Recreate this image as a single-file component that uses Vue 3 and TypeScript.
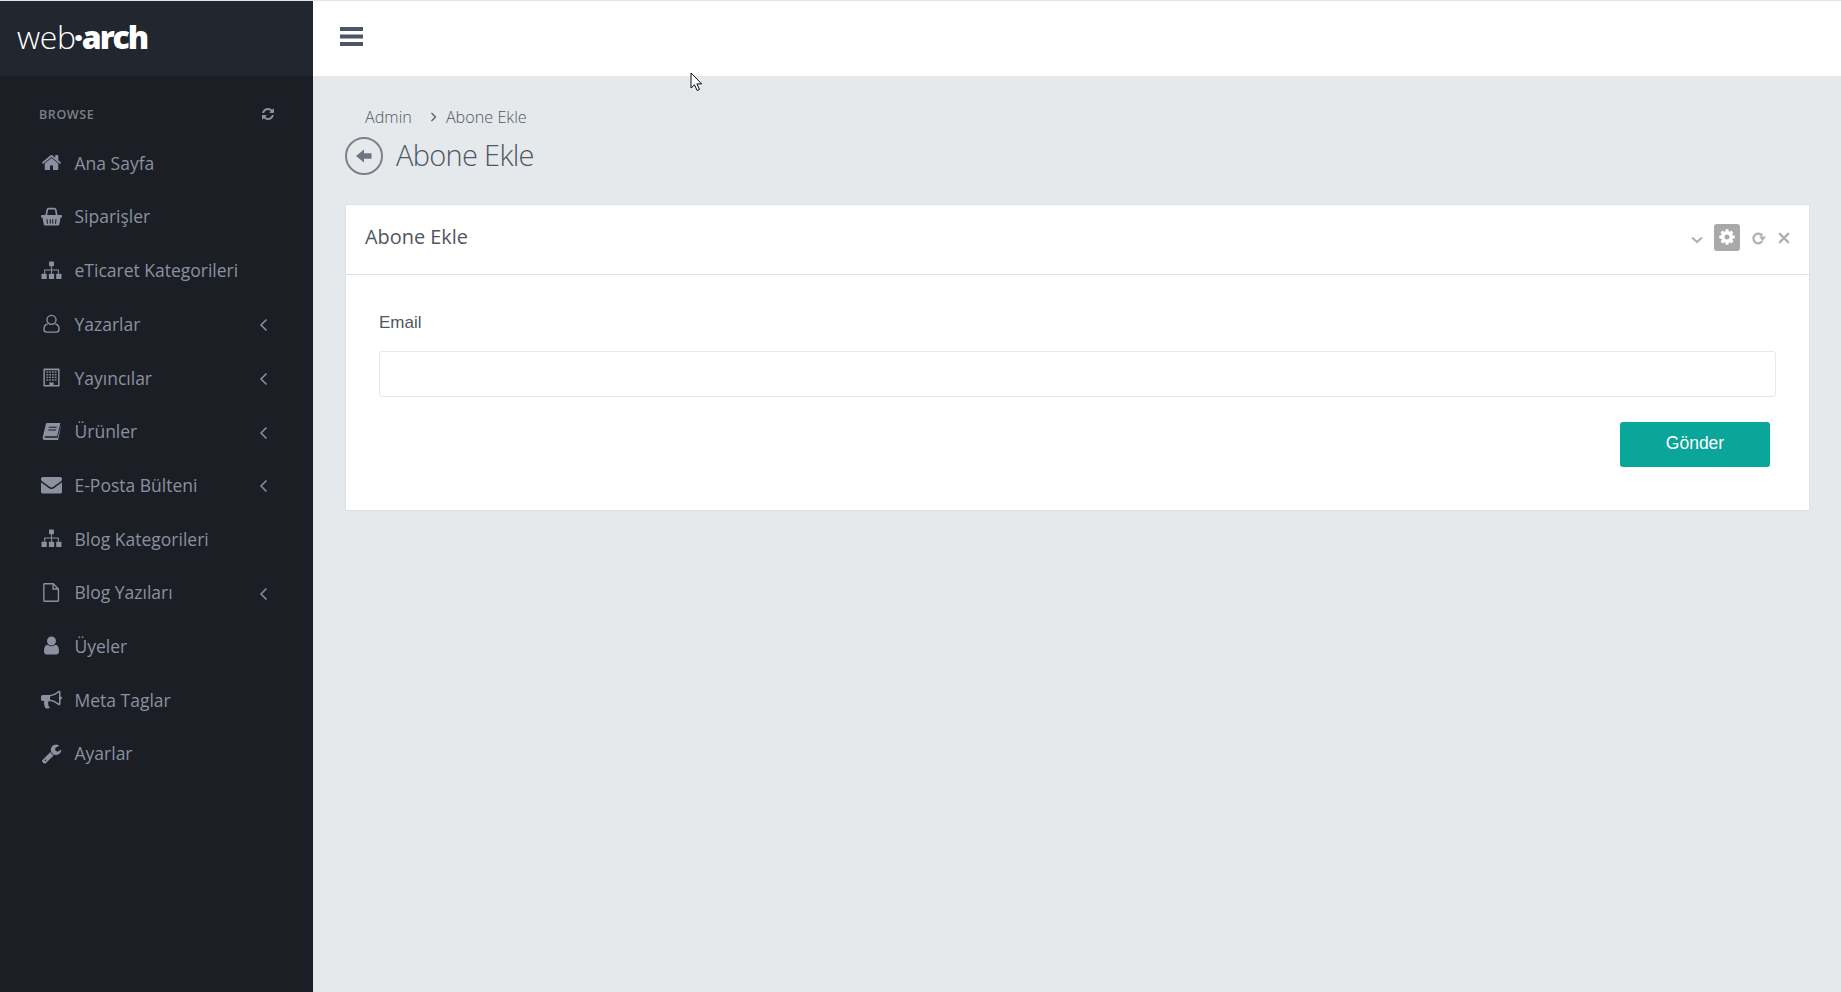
<script setup lang="ts">
interface Item { label: string; icon: string; sub?: boolean }
const items: Item[] = [
  { label: 'Ana Sayfa', icon: 'home' },
  { label: 'Siparişler', icon: 'basket' },
  { label: 'eTicaret Kategorileri', icon: 'sitemap' },
  { label: 'Yazarlar', icon: 'usero', sub: true },
  { label: 'Yayıncılar', icon: 'building', sub: true },
  { label: 'Ürünler', icon: 'book', sub: true },
  { label: 'E-Posta Bülteni', icon: 'envelope', sub: true },
  { label: 'Blog Kategorileri', icon: 'sitemap' },
  { label: 'Blog Yazıları', icon: 'file', sub: true },
  { label: 'Üyeler', icon: 'user' },
  { label: 'Meta Taglar', icon: 'bullhorn' },
  { label: 'Ayarlar', icon: 'wrench' },
]
</script>

<template>
  <div class="page">
    <aside class="sidebar">
      <div class="logo"><span class="web">web</span><span class="dot">·</span><span class="arch">arch</span></div>
      <div class="browse">
        <span>BROWSE</span>
        <svg class="refresh" viewBox="0 0 1792 1792"><path fill="currentColor" d="M1639 1056q0 5-1 7-64 268-268 434.500t-478 166.500q-146 0-282.500-55t-243.500-157l-129 129q-19 19-45 19t-45-19-19-45v-448q0-26 19-45t45-19h448q26 0 45 19t19 45-19 45l-137 137q71 66 161 102t187 36q134 0 250-65t186-179q11-17 53-117 8-23 30-23h192q13 0 22.500 9.500t9.500 22.500zm25-800v448q0 26-19 45t-45 19h-448q-26 0-45-19t-19-45 19-45l138-138q-148-137-349-137-134 0-250 65t-186 179q-11 17-53 117-8 23-30 23h-199q-13 0-22.500-9.500t-9.500-22.500v-7q65-268 270-434.500t480-166.500q146 0 284 55.500t245 156.500l130-129q19-19 45-19t45 19 19 45z"/></svg>
      </div>
      <nav class="menu">
        <a v-for="item in items" :key="item.label" class="item">
          <span class="ico">
            <svg v-if="item.icon === 'home'" viewBox="0 0 1792 1792"><path fill="currentColor" d="M1472 992v480q0 26-19 45t-45 19h-384v-384h-256v384h-384q-26 0-45-19t-19-45v-480q0-1 .5-3t.5-3l575-474 575 474q1 2 1 6zm223-69l-62 74q-8 9-21 11h-3q-13 0-21-7l-692-577-692 577q-12 8-24 7-13-2-21-11l-62-74q-8-10-7-23.500t11-21.500l719-599q32-26 76-26t76 26l244 204v-195q0-14 9-23t23-9h192q14 0 23 9t9 23v408l219 182q10 8 11 21.500t-7 23.500z"/></svg>
            <svg v-else-if="item.icon === 'basket'" viewBox="0 0 20 20"><path fill="none" stroke="currentColor" stroke-width="1.600" d="M5 9l1-5.500q.2-1 1.200-1h5.600q1 0 1.200 1l1 5.500"/><path fill="currentColor" fill-rule="evenodd" d="M1 8.500h18q1 0 1 1v.7q0 1-1 1h-.4l-1.200 6.300q-.2 1-1.200 1H3.800q-1 0-1.200-1L1.400 11.200H1q-1 0-1-1v-.7q0-1 1-1zM5.200 12.500l.5 4.500h1l-.5-4.500zM8.300 12.500v4.500h1v-4.500zM10.700 12.500v4.500h1v-4.500zM13.800 12.500l-.5 4.500h1l.5-4.500z"/></svg>
            <svg v-else-if="item.icon === 'sitemap'" viewBox="0 0 20 20"><g fill="currentColor"><rect x="7.700" y="1.500" width="4.600" height="4.500" rx=".5"/><rect x=".5" y="13" width="5" height="5" rx=".5"/><rect x="7.500" y="13" width="5" height="5" rx=".5"/><rect x="14.500" y="13" width="5" height="5" rx=".5"/><path d="M9.500 6h1v3h6.500v4h-1v-3h-5.500v3h-1v-3H4v3H3V9h6.500z"/></g></svg>
            <svg v-else-if="item.icon === 'usero'" viewBox="0 0 20 20"><g fill="none" stroke="currentColor" stroke-width="1.300"><circle cx="10" cy="6.500" r="4.300"/><path d="M6.300 10.500C4 11 2.800 13 2.800 15.500c0 1.700 1 2.700 2.500 2.700h9.400c1.500 0 2.500-1 2.500-2.700 0-2.500-1.200-4.500-3.500-5"/></g></svg>
            <svg v-else-if="item.icon === 'building'" viewBox="0 0 20 20"><path fill="currentColor" fill-rule="evenodd" d="M3 1.500h14a.7.7 0 0 1 .7.7v15.600a.7.7 0 0 1-.7.7H3a.7.7 0 0 1-.7-.7V2.200a.7.7 0 0 1 .7-.7zM3.700 3v14.100H8v-2.300h4v2.300h4.300V3z"/><g fill="currentColor"><rect x="5.200" y="4.200" width="1.700" height="1.300"/><rect x="7.800" y="4.200" width="1.700" height="1.300"/><rect x="10.500" y="4.200" width="1.700" height="1.300"/><rect x="13.100" y="4.200" width="1.700" height="1.300"/><rect x="5.200" y="6.700" width="1.700" height="1.300"/><rect x="7.800" y="6.700" width="1.700" height="1.300"/><rect x="10.500" y="6.700" width="1.700" height="1.300"/><rect x="13.100" y="6.700" width="1.700" height="1.300"/><rect x="5.200" y="9.200" width="1.700" height="1.300"/><rect x="7.800" y="9.200" width="1.700" height="1.300"/><rect x="10.500" y="9.200" width="1.700" height="1.300"/><rect x="13.100" y="9.200" width="1.700" height="1.300"/><rect x="5.200" y="11.700" width="1.700" height="1.300"/><rect x="7.800" y="11.700" width="1.700" height="1.300"/><rect x="10.500" y="11.700" width="1.700" height="1.300"/><rect x="13.100" y="11.700" width="1.700" height="1.300"/></g></svg>
            <svg v-else-if="item.icon === 'book'" viewBox="0 0 20 20"><path fill="currentColor" d="M6 2h12.500l-3.200 12.500H4.200c-1 0-1.200 1.500 0 1.500h11.600l3.200-12v1L16.300 18H3.500C2 18 1.200 16.600 1.700 15.200L4.500 3.300C4.700 2.500 5.300 2 6 2z"/><path fill="#1b1e24" d="M7.500 5.500h7.500l-.2 1H7.300zM7 8h7.500l-.2 1H6.800z"/></svg>
            <svg v-else-if="item.icon === 'envelope'" viewBox="0 0 1792 1792"><path fill="currentColor" d="M1792 710v794q0 66-47 113t-113 47h-1472q-66 0-113-47t-47-113v-794q44 49 101 87 362 246 497 345 57 42 92.500 65.500t94.500 48 110 24.500h2q51 0 110-24.500t94.500-48 92.500-65.500q170-123 498-345 57-39 100-87zm0-294q0 79-49 151t-122 123q-376 261-468 325-10 7-42.500 30.500t-54 38-52 32.500-57.500 27-50 9h-2q-23 0-50-9t-57.500-27-52-32.500-54-38-42.500-30.500q-91-64-262-182.500t-205-142.500q-62-42-117-115.500t-55-136.500q0-78 41.500-130t118.500-52h1472q65 0 112.500 47t47.500 113z"/></svg>
            <svg v-else-if="item.icon === 'file'" viewBox="0 0 20 20"><path fill="none" stroke="currentColor" stroke-width="1.300" d="M3.400 1.700h8.300l4.900 4.900v11a.7.7 0 0 1-.7.7H3.400a.7.7 0 0 1-.7-.7V2.400a.7.7 0 0 1 .7-.7zM11.500 1.700v5h5"/></svg>
            <svg v-else-if="item.icon === 'user'" viewBox="0 0 1792 1792"><path fill="currentColor" d="M1536 1399q0 109-62.500 187t-150.500 78h-854q-88 0-150.500-78t-62.500-187q0-85 8.500-160.500t31.500-152 58.500-131 94-89 134.500-34.500q131 128 313 128t313-128q76 0 134.500 34.500t94 89 58.500 131 31.500 152 8.500 160.500zm-256-887q0 159-112.500 271.500t-271.500 112.500-271.500-112.500-112.500-271.500 112.500-271.500 271.500-112.500 271.500 112.500 112.500 271.500z"/></svg>
            <svg v-else-if="item.icon === 'bullhorn'" viewBox="0 0 1792 1792"><path fill="currentColor" d="M1664 640q53 0 90.500 37.500t37.500 90.500-37.500 90.500-90.500 37.500v384q0 52-38 90t-90 38q-417-347-812-380-58 19-91 66t-31 100.500 40 92.500q-20 33-23 65.500t6 58 33.500 55 48 50 61.500 50.500q-29 58-111.500 83t-168.500 11.500-132-55.500q-7-23-29.500-87.500t-32-94.500-23-89-15-101 3.500-98.500 22-110.500h-122q-66 0-113-47t-47-113v-192q0-66 47-113t113-47h480q435 0 896-384 52 0 90 38t38 90v384zm-128 604v-954q-394 302-768 343v270q377 42 768 341z"/></svg>
            <svg v-else viewBox="0 0 1792 1792"><path fill="currentColor" d="M448 1472q0-26-19-45t-45-19-45 19-19 45 19 45 45 19 45-19 19-45zm644-420l-682 682q-37 37-90 37-52 0-91-37l-106-108q-38-36-38-90 0-53 38-91l681-681q39 98 114.500 173.500t173.500 114.500zm634-435q0 39-23 106-47 134-164.500 217.500t-258.500 83.500q-185 0-316.500-131.500t-131.500-316.500 131.500-316.500 316.500-131.500q58 0 121.500 16.500t107.500 46.500q16 11 16 28t-16 28l-293 169v224l193 107q5-3 79-48.500t135.500-81 70.500-35.500q15 0 23.500 10t8.500 25z"/></svg>
          </span>
          <span class="label">{{ item.label }}</span>
          <svg v-if="item.sub" class="arrow" viewBox="0 0 8 14"><path fill="none" stroke="currentColor" stroke-width="1.500" d="M7 1.500L1.500 7 7 12.500"/></svg>
        </a>
      </nav>
    </aside>

    <div class="main">
      <header class="topbar">
        <svg class="burger" viewBox="0 0 23 19"><g fill="#4f5568"><rect width="23" height="4" y="0"/><rect width="23" height="4" y="7.500"/><rect width="23" height="4" y="15"/></g></svg>
      </header>
      <main class="content">
        <div class="crumbs">
          <span>Admin</span>
          <svg class="crumb-sep" viewBox="0 0 7 10"><path fill="none" stroke="currentColor" stroke-width="1.200" d="M1.500 1l4 4-4 4"/></svg>
          <span>Abone Ekle</span>
        </div>
        <div class="title-row">
          <span class="back">
            <svg viewBox="0 0 16 14"><path fill="#6f7580" d="M8 .5v3.800h7.500v5.400H8v3.800L0 7z"/></svg>
          </span>
          <h1>Abone Ekle</h1>
        </div>
        <section class="card">
          <div class="card-head">
            <h2>Abone Ekle</h2>
            <div class="tools">
              <svg class="t-chev" viewBox="0 0 12 8"><path fill="none" stroke="#b2b2b2" stroke-width="2.200" d="M1 1.500l5 4.500 5-4.500"/></svg>
              <span class="t-cog">
                <svg viewBox="0 0 1792 1792"><path fill="#fff" d="M1152 896q0-106-75-181t-181-75-181 75-75 181 75 181 181 75 181-75 75-181zm512-109v222q0 12-8 23t-20 13l-185 28q-19 54-39 91 35 50 107 138 10 12 10 25t-9 23q-27 37-99 108t-94 71q-12 0-26-9l-138-108q-44 23-91 38-16 136-29 186-7 28-36 28h-222q-14 0-24.500-8.500t-11.500-21.500l-28-184q-49-16-90-37l-141 107q-10 9-25 9-14 0-25-11-126-114-165-168-7-10-7-23 0-12 8-23 15-21 51-66.500t54-70.500q-27-50-41-99l-183-27q-13-2-21-12.500t-8-23.500v-222q0-12 8-23t19-13l186-28q14-46 39-92-40-57-107-138-10-12-10-24 0-10 9-23 26-36 98.500-107.500t94.500-71.500q13 0 26 10l138 107q44-23 91-38 16-136 29-186 7-28 36-28h222q14 0 24.500 8.500t11.500 21.500l28 184q49 16 90 37l142-107q9-9 24-9 13 0 25 10 129 119 165 170 7 8 7 22 0 12-8 23-15 21-51 66.500t-54 70.500q26 50 41 98l183 28q13 2 21 12.500t8 23.500z"/></svg>
              </span>
              <svg class="t-reload" viewBox="0 0 14 12"><path fill="none" stroke="#b2b2b2" stroke-width="2.200" d="M10.500 3.500A4.500 4.500 0 1 0 10.500 8.500"/><path fill="#b2b2b2" d="M7.500 4.200h6.500L10.800 8.500z"/></svg>
              <svg class="t-close" viewBox="0 0 12 12"><path fill="none" stroke="#b2b2b2" stroke-width="2.400" d="M1.200 1.200l9.600 9.600M10.800 1.200l-9.600 9.600"/></svg>
            </div>
          </div>
          <form class="card-body" @submit.prevent>
            <label class="field-label" for="email">Email</label>
            <input id="email" class="field" type="text" />
            <div class="actions"><button class="submit" type="submit">Gönder</button></div>
          </form>
        </section>
      </main>
    </div>

    <svg class="cursor" viewBox="0 0 13 20"><path fill="#fff" stroke="#111" stroke-width="1" d="M1 1v15l3.500-3.200 2.600 5.700 2.400-1-2.600-5.600h4.800z"/></svg>
  </div>
</template>

<style>
html, body { margin: 0; padding: 0; background: #e5e9ec; }
</style>

<style scoped>
.page {
  position: relative;
  display: grid;
  grid-template-columns: 313px 1fr;
  min-height: 992px;
  font-family: "Open Sans", "Liberation Sans", sans-serif;
  overflow: hidden;
}
.sidebar { background: #1b1e24; color: #8b91a0; }
.logo {
  height: 71px;
  padding: 0 0 4px 17px;
  border-top: 1px solid #e3e5e8;
  background: #22262e;
  box-sizing: content-box;
  display: flex;
  align-items: center;
  color: #fff;
  font-size: 32px;
  line-height: 1;
}
.web { font-weight: 300; letter-spacing: -.4px; }
.dot { font-weight: 800; margin: 0 -1.500px; }
.arch { font-weight: 800; letter-spacing: -2.100px; }
.browse {
  height: 40px;
  padding: 18px 38px 2px 39px;
  display: flex;
  align-items: center;
  justify-content: space-between;
  font-size: 12.500px;
  font-weight: 600;
  letter-spacing: .6px;
  color: #7b808b;
}
.refresh { width: 14px; height: 14px; color: #8b91a0; }
.menu { display: flex; flex-direction: column; margin-top: -.1px; }
.item {
  height: 53.700px;
  display: flex;
  align-items: center;
  padding-left: 41px;
  font-size: 17.500px;
  color: #8b91a0;
}
.ico { width: 33.500px; height: 21px; display: flex; align-items: center; flex: none; }
.ico svg { width: 21px; height: 21px; }
.label { flex: 1; }
.arrow { width: 9px; height: 14px; margin-right: 45px; margin-top: 3px; color: #8b91a0; }
.main { display: flex; flex-direction: column; min-width: 0; }
.topbar {
  height: 75px;
  background: #fff;
  border-top: 1px solid #dfe2e6;
  display: flex;
  align-items: center;
  padding-left: 27px;
}
.burger { width: 23px; height: 19px; margin-top: -4px; }
.content { padding: 28px 31px 0 32px; }
.crumbs {
  height: 26px;
  margin-left: 20px;
  display: flex;
  align-items: center;
  font-size: 16.200px;
  font-weight: 300;
  color: #505662;
}
.crumb-sep { width: 7px; height: 10px; margin: 0 9px 0 18px; color: #505662; }
.title-row { display: flex; align-items: center; gap: 13px; height: 38px; margin-top: 7px; }
.back {
  width: 38px;
  height: 38px;
  box-sizing: border-box;
  border: 2px solid #7c818b;
  border-radius: 50%;
  display: flex;
  align-items: center;
  justify-content: center;
  flex: none;
}
.back svg { width: 16px; height: 14px; }
h1 {
  margin: -2px 0 0;
  font-size: 29px;
  font-weight: 300;
  letter-spacing: -.7px;
  color: #505662;
  line-height: 38px;
}
.card {
  margin-top: 29px;
  background: #fff;
  border: 1px solid #dde1e4;
}
.card-head {
  height: 69px;
  border-bottom: 1px solid #dde0e3;
  display: flex;
  align-items: center;
  justify-content: space-between;
  padding: 0 19px 0 19px;
}
h2 { margin: -6px 0 0; font-size: 19.900px; font-weight: 400; color: #505662; }
.tools { display: flex; align-items: center; margin-top: -3px; }
.t-chev { width: 12px; height: 8px; margin-top: 3px; }
.t-cog {
  width: 26px;
  height: 27px;
  margin: -2px 0 0 11px;
  border-radius: 3px;
  background: #a9a9a9;
  display: flex;
  align-items: center;
  justify-content: center;
}
.t-cog svg { width: 18px; height: 18px; }
.t-reload { width: 15px; height: 13px; margin-left: 11px; }
.t-close { width: 12px; height: 12px; margin-left: 12px; }
.card-body { padding: 0 33px 43px 33px; display: flex; flex-direction: column; }
.field-label {
  margin-top: 37px;
  font-family: "Liberation Sans", Arial, sans-serif;
  font-size: 17px;
  line-height: 22px;
  color: #505662;
}
.field {
  margin-top: 17px;
  height: 46px;
  box-sizing: border-box;
  border: 1px solid #e5e7e9;
  border-radius: 3px;
  background: #fff;
  outline: none;
  width: 100%;
}
.actions { display: flex; justify-content: flex-end; padding-right: 6px; margin-top: 25px; }
.submit {
  width: 150px;
  height: 45px;
  border: 0;
  border-radius: 3px;
  background: #0aa699;
  color: #fff;
  font-family: "Liberation Sans", Arial, sans-serif;
  font-size: 17.500px;
  padding: 0 0 3px;
}
.cursor { position: absolute; left: 690px; top: 72px; width: 13px; height: 20px; }
</style>
